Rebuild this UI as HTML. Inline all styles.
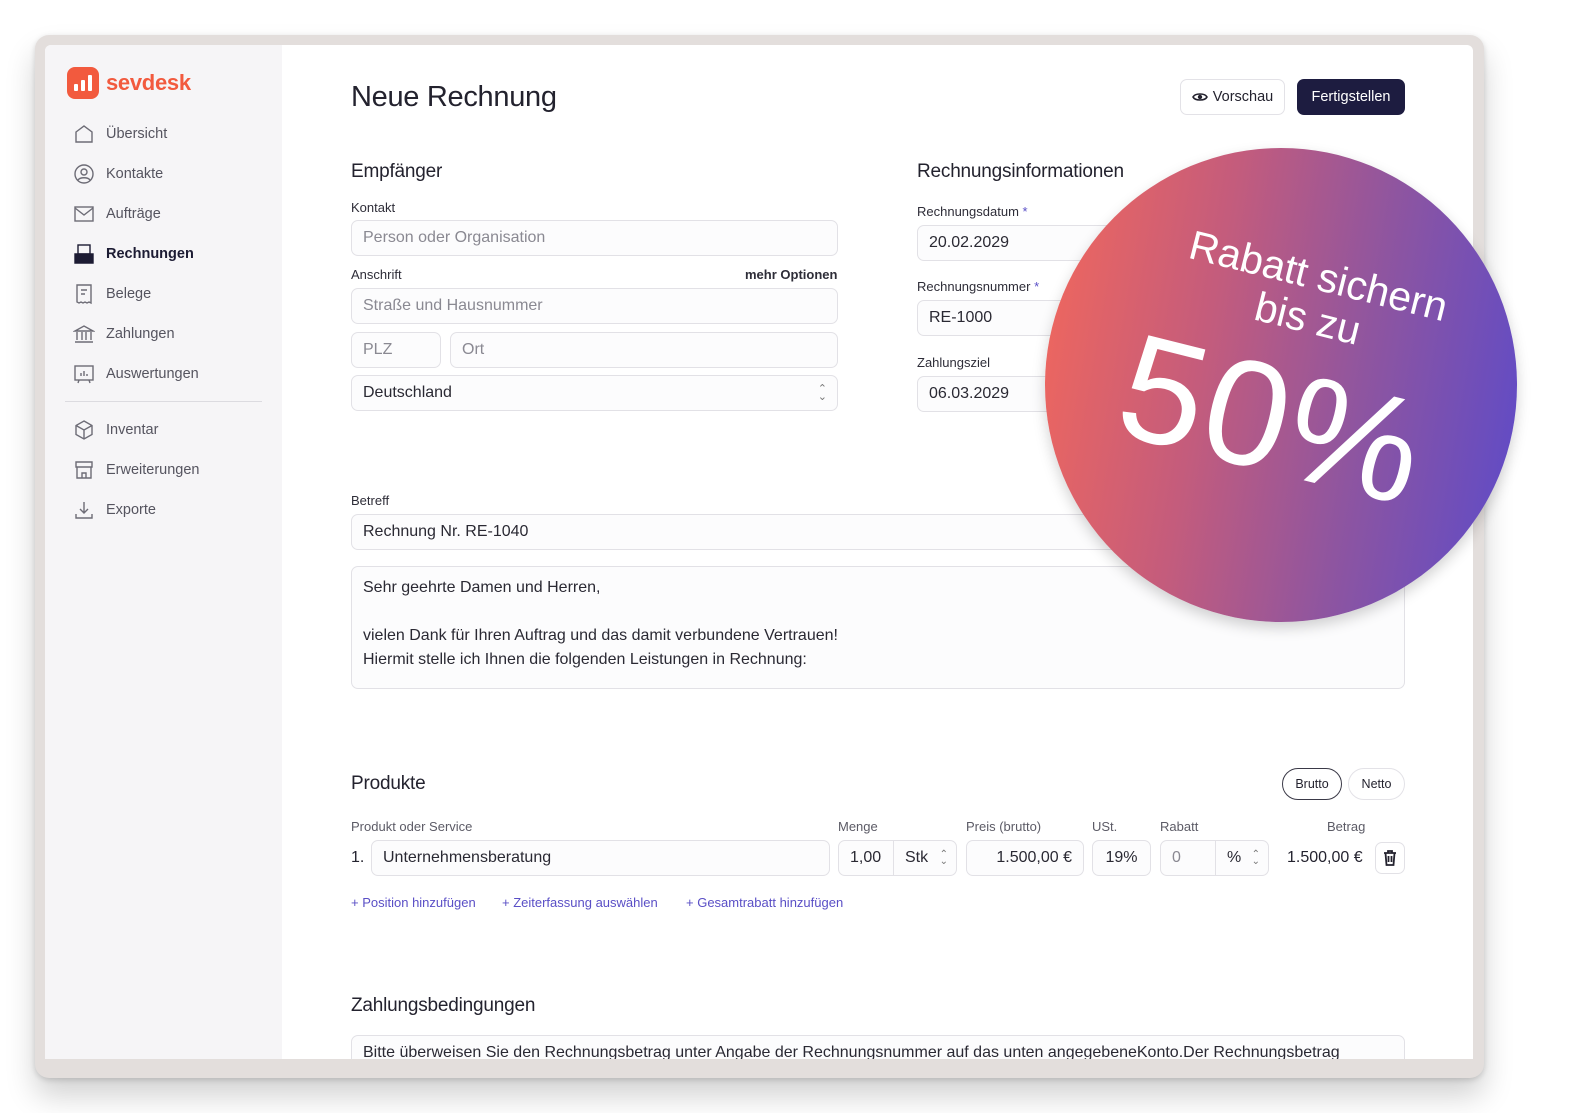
<!DOCTYPE html>
<html style="overflow:hidden;width:1579px;height:1113px"><head><meta charset="utf-8"><style>
*{box-sizing:border-box;margin:0;padding:0}
body{width:1579px;height:1113px;background:#fff;font-family:"Liberation Sans",sans-serif;position:relative;overflow:hidden;color:#24232f}
.frame{position:absolute;left:35px;top:35px;width:1449px;height:1043px;border-radius:14px;background:#e3dedc;box-shadow:0 18px 30px rgba(0,0,0,.18),0 2px 6px rgba(0,0,0,.15)}
.inner{position:absolute;left:45px;top:45px;width:1428px;height:1014px;background:#fff;overflow:hidden;border-radius:6px 6px 0 0}
.side{position:absolute;left:0;top:0;width:237px;height:100%;background:#f6f5f7}
.a{position:absolute}
.nav{position:absolute;left:28px;font-size:14.5px;color:#55545f;display:flex;align-items:center}
.nav svg{width:22px;height:22px;margin-right:11px;fill:none;stroke:#6d6c76;stroke-width:1.4}
.lbl{position:absolute;font-size:13px;color:#2e2d38}
.inp{position:absolute;border:1px solid #e2e1e6;border-radius:7px;background:#fcfcfd;font-size:16px;color:#2a2933;padding-left:11px;display:flex;align-items:center}
.ph{color:#8a8992}
h2{position:absolute;font-size:19px;font-weight:normal;color:#23222e;letter-spacing:-.2px}
.lnk{position:absolute;font-size:13px;color:#5a4fc6}
</style></head><body>
<div class="frame"></div>
<div class="inner">
<div class="side">
 <div class="a" style="left:22px;top:22px;width:32px;height:32px;border-radius:8px;background:#f25a3e"></div>
 <div class="a" style="left:29px;top:39px;width:4px;height:7px;background:#fff;border-radius:1px"></div>
 <div class="a" style="left:36px;top:35px;width:4px;height:11px;background:#fff;border-radius:1px"></div>
 <div class="a" style="left:43px;top:30px;width:4px;height:16px;background:#fff;border-radius:1px"></div>
 <div class="a" style="left:61px;top:25px;font-size:22px;color:#f25a3e;font-weight:bold;letter-spacing:-.3px">sevdesk</div>
 <div class="nav" style="top:78px"><svg viewBox="0 0 22 22"><path d="M3 9l8-6 8 6v10H3z"/></svg>Übersicht</div>
 <div class="nav" style="top:118px"><svg viewBox="0 0 22 22"><circle cx="11" cy="11" r="9"/><circle cx="11" cy="9" r="3"/><path d="M5 17c2-3 10-3 12 0"/></svg>Kontakte</div>
 <div class="nav" style="top:158px"><svg viewBox="0 0 22 22"><rect x="2" y="4" width="18" height="14"/><path d="M2 5l9 7 9-7"/></svg>Aufträge</div>
 <div class="nav" style="top:198px;color:#1c1b33;font-weight:bold"><svg viewBox="0 0 22 22" style="stroke:#1c1b33"><rect x="5" y="2" width="12" height="9" fill="none"/><path d="M2 11h18v9H2z" fill="#1c1b33"/></svg>Rechnungen</div>
 <div class="nav" style="top:238px"><svg viewBox="0 0 22 22"><path d="M4 2h14v18l-2-1-2 1-2-1-2 1-2-1-2 1-2-1z"/><path d="M8 7h6M8 11h4"/></svg>Belege</div>
 <div class="nav" style="top:278px"><svg viewBox="0 0 22 22"><path d="M2 8l9-5 9 5zM4 9v8M9 9v8M13 9v8M18 9v8M2 19h18"/></svg>Zahlungen</div>
 <div class="nav" style="top:318px"><svg viewBox="0 0 22 22"><rect x="2" y="3" width="18" height="14"/><path d="M8 13v-3M11 13V8M14 13v-2M6 17l-1 3M16 17l1 3"/></svg>Auswertungen</div>
 <div class="a" style="left:20px;top:356px;width:197px;height:1px;background:#dcdbe0"></div>
 <div class="nav" style="top:374px"><svg viewBox="0 0 22 22"><path d="M11 2l8 4.5v9L11 20l-8-4.5v-9z"/><path d="M3 6.5l8 4.5 8-4.5M11 11v9"/></svg>Inventar</div>
 <div class="nav" style="top:414px"><svg viewBox="0 0 22 22"><path d="M3 3h16v5H3zM4 8v11h14V8M9 19v-5h4v5"/></svg>Erweiterungen</div>
 <div class="nav" style="top:454px"><svg viewBox="0 0 22 22"><path d="M11 3v11M7 10l4 4 4-4M3 15v4h16v-4"/></svg>Exporte</div>
</div>

<div class="a" style="left:306px;top:36px;font-size:29px;color:#23222e;letter-spacing:-.3px">Neue Rechnung</div>
<div class="a" style="left:1135px;top:34px;width:105px;height:36px;border:1px solid #e3e2e7;border-radius:7px;font-size:14.5px;display:flex;align-items:center;justify-content:center;color:#23222e"><svg width="16" height="16" viewBox="0 0 16 16" style="margin-right:5px"><path d="M1 8c2-4 12-4 14 0-2 4-12 4-14 0z" fill="none" stroke="#23222e" stroke-width="1.6"/><circle cx="8" cy="8" r="2.2" fill="#23222e"/></svg>Vorschau</div>
<div class="a" style="left:1252px;top:34px;width:108px;height:36px;background:#1d1c40;border-radius:7px;color:#fff;font-size:14.5px;display:flex;align-items:center;justify-content:center">Fertigstellen</div>

<h2 style="left:306px;top:116px">Empfänger</h2>
<div class="lbl" style="left:306px;top:155px">Kontakt</div>
<div class="inp ph" style="left:306px;top:175px;width:487px;height:36px">Person oder Organisation</div>
<div class="lbl" style="left:306px;top:222px">Anschrift</div>
<div class="lbl" style="left:700px;top:222px;font-weight:bold">mehr Optionen</div>
<div class="inp ph" style="left:306px;top:243px;width:487px;height:36px">Straße und Hausnummer</div>
<div class="inp ph" style="left:306px;top:287px;width:90px;height:36px">PLZ</div>
<div class="inp ph" style="left:405px;top:287px;width:388px;height:36px">Ort</div>
<div class="inp" style="left:306px;top:330px;width:487px;height:36px">Deutschland<span style="position:absolute;right:10px;font-size:11px;color:#777;line-height:8px">⌃<br>⌄</span></div>

<h2 style="left:872px;top:116px">Rechnungsinformationen</h2>
<div class="lbl" style="left:872px;top:159px">Rechnungsdatum <span style="color:#5a4fc6">*</span></div>
<div class="inp" style="left:872px;top:180px;width:300px;height:36px">20.02.2029</div>
<div class="lbl" style="left:872px;top:234px">Rechnungsnummer <span style="color:#5a4fc6">*</span></div>
<div class="inp" style="left:872px;top:255px;width:300px;height:36px">RE-1000</div>
<div class="lbl" style="left:872px;top:310px">Zahlungsziel</div>
<div class="inp" style="left:872px;top:331px;width:300px;height:36px">06.03.2029</div>

<div class="lbl" style="left:306px;top:448px">Betreff</div>
<div class="inp" style="left:306px;top:469px;width:1054px;height:36px">Rechnung Nr. RE-1040</div>
<div class="inp" style="left:306px;top:521px;width:1054px;height:123px;align-items:flex-start;padding-top:9px;line-height:24px;display:block">Sehr geehrte Damen und Herren,<br><br>vielen Dank für Ihren Auftrag und das damit verbundene Vertrauen!<br>Hiermit stelle ich Ihnen die folgenden Leistungen in Rechnung:</div>

<h2 style="left:306px;top:728px">Produkte</h2>
<div class="a" style="left:1237px;top:723px;width:60px;height:32px;border:1.5px solid #3a3947;border-radius:16px;font-size:12.5px;display:flex;align-items:center;justify-content:center">Brutto</div>
<div class="a" style="left:1303px;top:723px;width:57px;height:32px;border:1px solid #e3e2e7;border-radius:16px;font-size:12.5px;display:flex;align-items:center;justify-content:center">Netto</div>
<div class="lbl" style="left:306px;top:774px;color:#5c5b66">Produkt oder Service</div>
<div class="lbl" style="left:793px;top:774px;color:#5c5b66">Menge</div>
<div class="lbl" style="left:921px;top:774px;color:#5c5b66">Preis (brutto)</div>
<div class="lbl" style="left:1047px;top:774px;color:#5c5b66">USt.</div>
<div class="lbl" style="left:1115px;top:774px;color:#5c5b66">Rabatt</div>
<div class="lbl" style="left:1282px;top:774px;color:#5c5b66">Betrag</div>
<div class="a" style="left:306px;top:804px;font-size:16px">1.</div>
<div class="inp" style="left:326px;top:795px;width:459px;height:36px">Unternehmensberatung</div>
<div class="inp" style="left:793px;top:795px;width:119px;height:36px">1,00<span style="position:absolute;left:54px;top:0;bottom:0;border-left:1px solid #e2e1e6"></span><span style="position:absolute;left:66px">Stk</span><span style="position:absolute;right:8px;font-size:10px;color:#777;line-height:7px">⌃<br>⌄</span></div>
<div class="inp" style="left:921px;top:795px;width:118px;height:36px;justify-content:flex-end;padding-right:11px">1.500,00 €</div>
<div class="inp" style="left:1047px;top:795px;width:59px;height:36px;justify-content:center;padding:0">19%</div>
<div class="inp ph" style="left:1115px;top:795px;width:109px;height:36px">0<span style="position:absolute;left:54px;top:0;bottom:0;border-left:1px solid #e2e1e6"></span><span style="position:absolute;left:66px;color:#2a2933">%</span><span style="position:absolute;right:8px;font-size:10px;color:#777;line-height:7px">⌃<br>⌄</span></div>
<div class="a" style="left:1242px;top:804px;font-size:16px">1.500,00 €</div>
<div class="a" style="left:1330px;top:797px;width:30px;height:32px;border:1px solid #e2e1e6;border-radius:7px"><svg width="14" height="16" viewBox="0 0 14 16" style="position:absolute;left:7px;top:7px"><path d="M1 3h12M5 3V1h4v2M2.5 3l1 12h7l1-12M5.5 6v6M8.5 6v6" fill="none" stroke="#23222e" stroke-width="1.8"/></svg></div>
<div class="lnk" style="left:306px;top:850px">+ Position hinzufügen</div>
<div class="lnk" style="left:457px;top:850px">+ Zeiterfassung auswählen</div>
<div class="lnk" style="left:641px;top:850px">+ Gesamtrabatt hinzufügen</div>

<h2 style="left:306px;top:950px">Zahlungsbedingungen</h2>
<div class="inp" style="left:306px;top:990px;width:1054px;height:60px;align-items:flex-start;padding-top:7px;display:block;line-height:20px">Bitte überweisen Sie den Rechnungsbetrag unter Angabe der Rechnungsnummer auf das unten angegebeneKonto.Der Rechnungsbetrag</div>
</div>

<div class="a" style="left:1045px;top:148px;width:472px;height:474px;border-radius:50%;background:linear-gradient(100deg,#f4685a 0%,#c45c7c 35%,#8e55a0 65%,#5a4acb 100%);box-shadow:0 6px 14px rgba(0,0,0,.18);overflow:hidden">
 <div class="a" style="left:0;top:0;width:472px;height:474px;transform:rotate(14deg);color:#fff;text-align:center">
  <div class="a" style="left:0;width:472px;top:100px;font-size:41px;line-height:44px;padding-left:20px">Rabatt sichern<br>bis zu</div>
  <div class="a" style="left:0;width:472px;top:192px;font-size:150px;line-height:160px;padding-left:0;letter-spacing:2px">50%</div>
 </div>
</div>
</body></html>
